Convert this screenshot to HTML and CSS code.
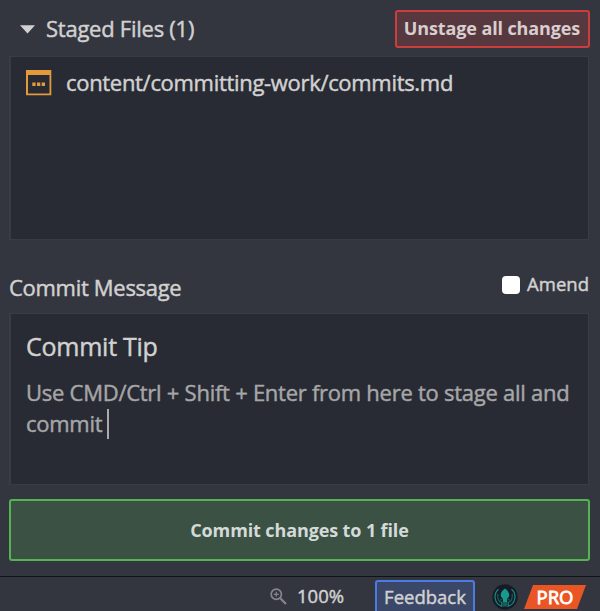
FILE: index.html
```
<!DOCTYPE html>
<html lang="en">
<head>
<meta charset="utf-8">
<title>Commit</title>
<link rel="stylesheet" href="styles.css">
</head>
<body>
<main class="commit-panel">
  <header class="staged-header">
    <svg class="caret" width="15" height="9" viewBox="0 0 15 9"><path d="M0 .3H15L7.5 8.6Z" fill="#d1d1d1"/></svg>
    <h2 class="staged-title">Staged Files (1)</h2>
    <button class="unstage">Unstage all changes</button>
  </header>
  <section class="box file-list">
    <div class="file">
      <svg class="file-icon" width="26" height="26" viewBox="0 0 26 26"><path fill="#e39a3b" fill-rule="evenodd" d="M0 0H25.300V25.300H0ZM2 5V23.500H23.500V5Z"/><path fill="#e39a3b" d="M6.300 12.500h3.300V16H6.300zM11 12.500h3.300V16h-3.300zM15.700 12.500h3.300V16h-3.300z"/></svg>
      <span class="file-name">content/committing-work/commits.md</span>
    </div>
  </section>
  <div class="message-header">
    <h2 class="message-title">Commit Message</h2>
    <label class="amend"><span class="checkbox"></span><span class="amend-text">Amend</span></label>
  </div>
  <section class="box message">
    <h3 class="summary">Commit Tip</h3>
    <p class="description">Use CMD/Ctrl + Shift + Enter from here to stage all and<br>commit<span class="cursor"></span></p>
  </section>
  <button class="commit"><span class="commit-text">Commit changes to 1 file</span></button>
</main>
<footer class="status">
  <svg class="zoom-icon" width="17" height="17" viewBox="0 0 17 17" fill="none" stroke="#85868a"><circle cx="6.3" cy="6.3" r="5.1" stroke-width="1.7"/><path d="M3.8 6.3h5M6.3 3.8v5" stroke-width="1.2"/><path d="M10.2 10.2L16 16" stroke-width="2.2"/></svg>
  <span class="zoom-level">100%</span>
  <button class="feedback">Feedback</button>
  <svg class="kraken" width="26" height="26" viewBox="0 0 26 26">
    <circle cx="13" cy="13" r="12.7" fill="#151c28"/>
    <path d="M13 4.500C10.500 6 8.400 9 8.800 11.800C9 13.200 10.500 14 11 15V18H15V15C15.500 14 17 13.200 17.200 11.800C17.600 9 15.500 6 13 4.500Z" fill="#179b8c"/>
    <path d="M6.500 5.300A10 10 0 0 0 9.800 22.300V17.500M19.500 5.300A10 10 0 0 1 16.200 22.300V17.500M12 17V22.500M14 17V22.500" fill="none" stroke="#168c80" stroke-width="1.2"/>
    <path d="M5.800 10C5.500 14 6.300 16.500 8 18.300V16.300L10.700 14.500M20.200 10C20.500 14 19.700 16.500 18 18.300V16.300L15.300 14.500" fill="none" stroke="#126f69" stroke-width="1"/>
  </svg>
  <span class="pro"><span class="pro-text">PRO</span></span>
</footer>
</body>
</html>
```

FILE: styles.css
```
* { box-sizing: border-box; }
body {
  margin: 0;
  width: 600px;
  height: 611px;
  overflow: hidden;
  background: #34363f;
  color: #d1d1d1;
  font: 22px/30px "Open Sans", sans-serif;
  -webkit-text-stroke: 0.45px currentColor;
}
h2, h3, p { margin: 0; font-weight: 400; }
button { font: inherit; color: inherit; padding: 0; white-space: nowrap; }
.commit-panel { height: 576px; padding: 10px 11px 0 9px; }
.staged-header { display: flex; align-items: center; width: 580.5px; height: 38px; }
.caret { margin-left: 11px; }
.staged-title { margin: 0 0 3px 11px; font-size: 22px; letter-spacing: -0.25px; }
.unstage {
  width: 195px;
  height: 38px;
  margin-left: auto;
  padding-bottom: 2px;
  border: 2px solid #cc3e3b;
  border-radius: 3px;
  background: #57383e;
  color: #d8cdcf;
  font-size: 18px;
  letter-spacing: -0.12px;
  font-weight: 700;
  -webkit-text-stroke: 0;
}
.box { width: 580px; border: 1px solid #3a3c45; border-left-width: 2px; background: #282b33; }
.file-list { height: 184px; margin-top: 8px; padding: 11px 15px; }
.file { display: flex; align-items: center; height: 30px; }
.file-name { margin: 0 0 3px 14px; font-size: 22px; letter-spacing: -0.31px; }
.message-header { display: flex; justify-content: space-between; height: 73px; padding-top: 32px; }
.message-title { font-size: 22px; letter-spacing: -0.3px; }
.amend { display: flex; align-items: center; height: 26px; font-size: 18.5px; }
.amend-text { margin-bottom: 2px; }
.checkbox { width: 18px; height: 18px; margin-right: 7px; border-radius: 4px; background: #fff; }
.message { height: 172px; padding: 15px; }
.summary { font-size: 25px; line-height: 34px; letter-spacing: -0.25px; }
.description { margin-top: 14px; color: #a6a6a8; font-size: 22px; line-height: 31px; letter-spacing: -0.26px; white-space: nowrap; }
.cursor { display: inline-block; width: 2px; height: 30px; margin-left: 5px; background: #aaa; vertical-align: -7px; }
.commit {
  display: block;
  width: 581px;
  height: 62px;
  margin-top: 14px;
  border: 2px solid #55b452;
  border-radius: 3px;
  background: #3b5144;
  color: #d4dad7;
  font-size: 18px;
  letter-spacing: -0.12px;
  font-weight: 700;
  -webkit-text-stroke: 0;
}
.status { display: flex; height: 35px; border-top: 1px solid #111216; }
.zoom-icon { margin: 11px 0 0 270px; }
.zoom-level { width: 60px; margin: 4px 0 0 10px; font-size: 18.5px; }
.feedback {
  flex: none;
  width: 100px;
  height: 36px;
  margin: 3px 0 0 18px;
  padding-bottom: 3px;
  border: 2px solid #4b7be5;
  border-radius: 3px;
  background: #3b4767;
  font-size: 18.5px;
  line-height: 26px;
}
.kraken { margin: 7px 0 0 17px; }
.pro {
  display: flex;
  align-items: center;
  justify-content: center;
  width: 62px;
  height: 24px;
  margin: 8px 0 0 6px;
  background: #ea5526;
  clip-path: polygon(9px 0, 100% 0, 53px 100%, 0 100%);
  color: #fff;
  font-size: 18.5px;
  -webkit-text-stroke: 0.8px #fff;
}
.pro-text { margin-bottom: 1px; }
```
